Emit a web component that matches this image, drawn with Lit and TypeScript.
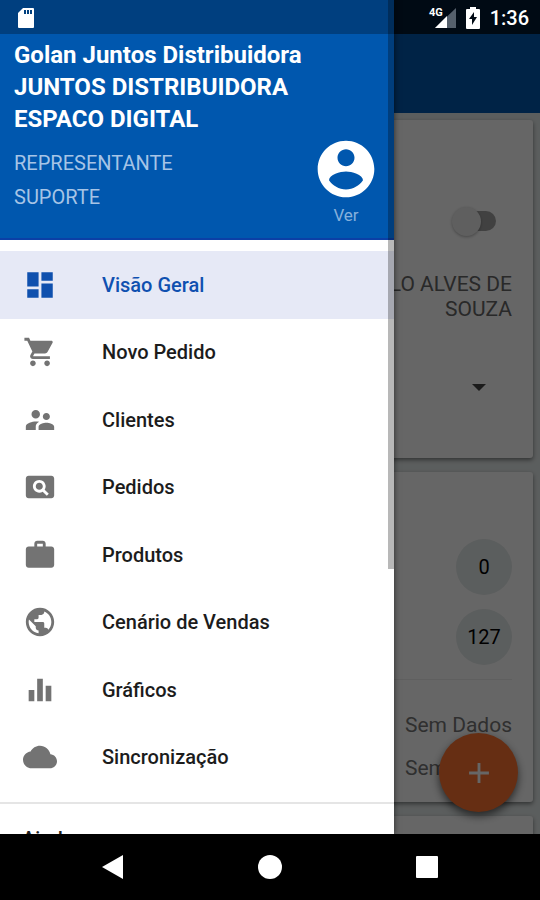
import { LitElement, html, css, svg } from "lit";
import { customElement } from "lit/decorators.js";
import { classMap } from "lit/directives/class-map.js";

const icons = {
  dashboard: svg`<path d="M3 13h8V3H3v10zm0 8h8v-6H3v6zm10 0h8V11h-8v10zm0-18v6h8V3h-8z"/>`,
  cart: svg`<path d="M7 18c-1.100 0-1.990.9-1.990 2S5.900 22 7 22s2-.9 2-2-.9-2-2-2zM1 2v2h2l3.600 7.590-1.350 2.450c-.16.28-.25.61-.25.96 0 1.100.9 2 2 2h12v-2H7.420c-.14 0-.25-.11-.25-.25l.03-.12.9-1.630h7.450c.75 0 1.410-.41 1.750-1.030l3.580-6.490c.08-.14.12-.31.12-.48 0-.55-.45-1-1-1H5.210l-.94-2H1zm16 16c-1.100 0-1.990.9-1.990 2s.89 2 1.990 2 2-.9 2-2-.9-2-2-2z"/>`,
  people: svg`<path d="M16.500 12c1.380 0 2.490-1.120 2.490-2.500S17.880 7 16.500 7 14 8.120 14 9.500s1.120 2.500 2.500 2.500zM9 11c1.660 0 2.990-1.340 2.990-3S10.660 5 9 5 6 6.340 6 8s1.340 3 3 3zm7.500 3c-1.830 0-5.500.92-5.500 2.750V19h11v-2.250c0-1.830-3.670-2.750-5.500-2.750zM9 13c-2.330 0-7 1.170-7 3.500V19h7v-2.250c0-.85.33-2.340 2.370-3.470C10.500 13.100 9.660 13 9 13z"/>`,
  search: svg`<path d="M11.500 9C10.120 9 9 10.120 9 11.500s1.120 2.500 2.500 2.500 2.500-1.120 2.500-2.500S12.880 9 11.500 9zM20 4H4c-1.100 0-2 .9-2 2v12c0 1.100.9 2 2 2h16c1.100 0 2-.9 2-2V6c0-1.100-.9-2-2-2zm-3.210 14.210l-2.910-2.910c-.69.44-1.510.7-2.390.7C9.010 16 7 13.990 7 11.500S9.010 7 11.500 7 16 9.010 16 11.500c0 .88-.26 1.690-.7 2.390l2.910 2.900-1.420 1.420z"/>`,
  bag: svg`<path d="M20 6h-4V4c0-1.110-.89-2-2-2h-4c-1.110 0-2 .89-2 2v2H4c-1.110 0-1.990.89-1.990 2L2 19c0 1.110.89 2 2 2h16c1.110 0 2-.89 2-2V8c0-1.110-.89-2-2-2zm-6 0h-4V4h4v2z"/>`,
  globe: svg`<path d="M12 2C6.480 2 2 6.480 2 12s4.480 10 10 10 10-4.480 10-10S17.520 2 12 2zm-1 17.930c-3.950-.49-7-3.850-7-7.930 0-.62.08-1.210.21-1.790L9 15v1c0 1.100.9 2 2 2v1.930zm6.900-2.540c-.26-.81-1-1.390-1.900-1.390h-1v-3c0-.55-.45-1-1-1H8v-2h2c.55 0 1-.45 1-1V7h2c1.100 0 2-.9 2-2v-.41c2.930 1.190 5 4.060 5 7.410 0 2.080-.8 3.970-2.100 5.390z"/>`,
  chart: svg`<path d="M10 20h4V4h-4v16zm-6 0h4v-8H4v8zM16 9v11h4V9h-4z"/>`,
  cloud: svg`<path d="M19.350 10.040C18.670 6.590 15.640 4 12 4 9.110 4 6.600 5.640 5.350 8.040 2.340 8.360 0 10.910 0 14c0 3.310 2.690 6 6 6h13c2.760 0 5-2.240 5-5 0-2.640-2.050-4.780-4.650-4.960z"/>`,
  account: svg`<path d="M12 2C6.480 2 2 6.480 2 12s4.480 10 10 10 10-4.480 10-10S17.520 2 12 2zm0 3c1.660 0 3 1.340 3 3s-1.340 3-3 3-3-1.340-3-3 1.340-3 3-3zm0 14.200c-2.500 0-4.710-1.280-6-3.220.03-1.990 4-3.080 6-3.080 1.990 0 5.970 1.090 6 3.080-1.290 1.940-3.500 3.220-6 3.220z"/>`,
};

const menu: { icon: keyof typeof icons; label: string }[] = [
  { icon: "dashboard", label: "Visão Geral" },
  { icon: "cart", label: "Novo Pedido" },
  { icon: "people", label: "Clientes" },
  { icon: "search", label: "Pedidos" },
  { icon: "bag", label: "Produtos" },
  { icon: "globe", label: "Cenário de Vendas" },
  { icon: "chart", label: "Gráficos" },
  { icon: "cloud", label: "Sincronização" },
];

@customElement("nav-drawer")
class NavDrawer extends LitElement {
  static styles = css`
    :host { display: flex; flex-direction: column; background: #fff; overflow: hidden; }
    header {
      display: flex; flex-direction: column; box-sizing: border-box;
      padding: 39px 14px 12px; height: 240px; flex: none;
      background: #0057ae; border-bottom: 2px solid #0b3fa6; color: #fff;
    }
    h1 { margin: 0; font-size: 24px; line-height: 32px; font-weight: 700; }
    .user { display: flex; justify-content: space-between; }
    .role { margin: 11px 0 0; font-size: 20px; line-height: 34px; color: #a6c4e6; }
    .profile {
      display: flex; flex-direction: column; align-items: center;
      border: 0; padding: 0; background: none; color: #86b0dc; font: 17px/24px Roboto, sans-serif;
    }
    .avatar { width: 68px; height: 68px; fill: #fff; }
    .body { flex: 1; min-height: 0; overflow: hidden; }
    ul {
      display: grid; grid-template-rows: repeat(8, 1fr); height: 540px;
      list-style: none; margin: 0; padding: 11px 0; border-bottom: 2px solid #e5e5e5;
    }
    li { display: grid; }
    .item {
      display: flex; align-items: center; gap: 45px; padding: 0 23px;
      color: #1c1c1c; text-decoration: none; font-size: 20px; font-weight: 500;
    }
    .item svg { width: 34px; height: 34px; fill: #737373; }
    .active { background: #e6e9f6; color: #0f50b0; }
    .active svg { fill: #0f50ae; }
    h2 { margin: 0; padding: 18px 22px; font-size: 20px; line-height: 34px; font-weight: 500; color: #1c1c1c; }
    .bar { position: absolute; right: 0; top: 0; width: 6px; height: 569px; background: rgba(0, 0, 0, 0.28); }
  `;
  render() {
    return html`
      <header>
        <h1>Golan Juntos Distribuidora JUNTOS DISTRIBUIDORA ESPACO DIGITAL</h1>
        <div class="user">
          <p class="role">REPRESENTANTE<br />SUPORTE</p>
          <button class="profile">
            <svg class="avatar" viewBox="0 0 24 24" aria-hidden="true">${icons.account}</svg>
            Ver
          </button>
        </div>
      </header>
      <div class="body">
        <nav>
          <ul>
            ${menu.map(
              (m, i) => html`<li>
                <a href="#" class=${classMap({ item: true, active: i === 0 })}>
                  <svg viewBox="0 0 24 24" aria-hidden="true">${icons[m.icon]}</svg>
                  <span>${m.label}</span>
                </a>
              </li>`
            )}
          </ul>
          <h2>Ajuda</h2>
        </nav>
      </div>
      <div class="bar"></div>
    `;
  }
}

@customElement("app-root")
class AppRoot extends LitElement {
  static styles = css`
    :host {
      display: flex; flex-direction: column; height: 100vh;
      background: #000; font-family: Roboto, sans-serif;
    }
    .screen { position: relative; flex: 1; min-height: 0; overflow: hidden; background: #e4eaea; }
    .status {
      position: absolute; inset: 0 0 auto; height: 34px; z-index: 4; box-sizing: border-box;
      display: flex; align-items: center; padding: 2px 11px 0 17px; color: #fff;
      background: rgba(0, 0, 0, 0.27); font-size: 20px; font-weight: 500;
    }
    .sd { width: 18px; height: 22px; margin-right: auto; }
    .signal { width: 28px; height: 24px; margin-right: 9px; }
    .battery { width: 16px; height: 22px; margin-right: 9px; }
    .scrim { position: absolute; inset: 0; z-index: 2; background: rgba(0, 0, 0, 0.6); }
    .darker { position: absolute; inset: 0 0 auto; height: 34px; z-index: 2; background: rgba(0, 0, 0, 0.6); }
    .drawer {
      position: absolute; inset: 0 146px 0 0; z-index: 3;
      box-shadow: 0 0 6px rgba(0, 0, 0, 0.6);
    }
    .toolbar { height: 113px; background: #0057ae; }
    .cards { display: flex; flex-direction: column; gap: 14px; padding: 7px; }
    .card {
      box-sizing: border-box; background: #fff; border-radius: 3px; padding: 0 21px;
      box-shadow: 0 2px 4px rgba(0, 0, 0, 0.45);
      display: flex; flex-direction: column; align-items: flex-end;
    }
    .profile-card { height: 338px; padding-top: 84px; }
    .totals-card { height: 330px; padding-top: 67px; }
    .toggle { appearance: none; position: relative; margin: 0 14px 0 0; width: 48px; height: 34px; }
    .toggle::before {
      content: ""; position: absolute; left: 14px; right: 2px; top: 7px; height: 20px;
      border-radius: 10px; background: #a4a4a4;
    }
    .toggle::after {
      content: ""; position: absolute; left: 2px; top: 3px; width: 29px; height: 29px;
      border-radius: 50%; background: #ededed; box-shadow: 0 1px 3px rgba(0, 0, 0, 0.3);
    }
    .name { margin: 34px 0 0; width: 160px; text-align: right; font-size: 21px; line-height: 25px; color: #666; }
    .pick {
      margin: 54px 26px 0 0; width: 14px; height: 24px; border: 0; padding: 0;
      background: none; display: flex; align-items: center;
    }
    .pick svg { width: 14px; height: 8px; fill: #444; }
    .count {
      width: 56px; height: 56px; margin-bottom: 14px; border-radius: 50%; background: #e4eaea;
      display: grid; place-items: center; font-size: 20px; line-height: 24px; color: #000;
    }
    .rule { align-self: stretch; height: 1px; border: 0; margin: 0 0 28px; background: #eee; }
    .empty { margin: 0 0 9px; font-size: 21px; line-height: 34px; color: #777; }
    .fab {
      position: absolute; right: 22px; bottom: 22px; z-index: 1; width: 79px; height: 79px;
      border: 0; padding: 0; border-radius: 50%; background: #ff7430;
      box-shadow: 0 4px 8px rgba(0, 0, 0, 0.6); display: grid; place-items: center;
    }
    .fab svg { width: 34px; height: 34px; fill: #fff; }
    .system { flex: none; height: 66px; display: flex; justify-content: space-around; align-items: center; padding: 0 35px; }
    .system button { width: 48px; height: 48px; padding: 0; border: 0; background: none; display: grid; place-items: center; }
    .system svg { width: 24px; height: 24px; fill: #fff; }
  `;
  render() {
    return html`
      <div class="screen">
        <div class="status">
          <svg class="sd" viewBox="0 0 18 22" aria-hidden="true">
            <path fill="#fff" d="M6 1H16a1 1 0 0 1 1 1V20a1 1 0 0 1-1 1H2a1 1 0 0 1-1-1V6z" />
            <path fill="#00407f" d="M7 3h2v4H7zM10 3h2v4h-2zM13 3h2v4h-2z" />
          </svg>
          <svg class="signal" viewBox="0 0 28 24" aria-hidden="true">
            <path fill="#55606c" d="M28 2V22H7z" />
            <path fill="#fff" d="M19 10V22H7z" />
            <text x="1" y="10" font-size="11" font-weight="700" fill="#fff">4G</text>
          </svg>
          <svg class="battery" viewBox="0 0 16 22" aria-hidden="true">
            <path fill="#fff" d="M5 0h6v2h3a1 1 0 0 1 1 1V21a1 1 0 0 1-1 1H2a1 1 0 0 1-1-1V3a1 1 0 0 1 1-1h3z" />
            <path fill="#000a14" d="M9 5l-5 7h3v6l5-8H9z" />
          </svg>
          <span>1:36</span>
        </div>
        <div class="toolbar"></div>
        <main class="cards">
          <section class="card profile-card">
            <input class="toggle" type="checkbox" role="switch" aria-label="Modo" />
            <p class="name">LO ALVES DE SOUZA</p>
            <button class="pick" aria-label="Abrir">
              <svg viewBox="0 0 14 8" aria-hidden="true"><path d="M0 0h14L7 7z" /></svg>
            </button>
          </section>
          <section class="card totals-card">
            <span class="count">0</span>
            <span class="count">127</span>
            <hr class="rule" />
            <p class="empty">Sem Dados</p>
            <p class="empty">Sem Dados</p>
          </section>
          <section class="card totals-card"></section>
        </main>
        <button class="fab" aria-label="Adicionar">
          <svg viewBox="0 0 24 24" aria-hidden="true"><path d="M19 13h-6v6h-2v-6H5v-2h6V5h2v6h6z" /></svg>
        </button>
        <div class="scrim"></div>
        <div class="darker"></div>
        <nav-drawer class="drawer"></nav-drawer>
      </div>
      <div class="system">
        <button aria-label="Voltar"><svg viewBox="0 0 24 24"><path d="M22 0V24L1 12z" /></svg></button>
        <button aria-label="Início"><svg viewBox="0 0 24 24"><circle cx="12" cy="12" r="12" /></svg></button>
        <button aria-label="Recentes"><svg viewBox="0 0 24 24"><rect x="1" y="1" width="22" height="22" rx="1" /></svg></button>
      </div>
    `;
  }
}
